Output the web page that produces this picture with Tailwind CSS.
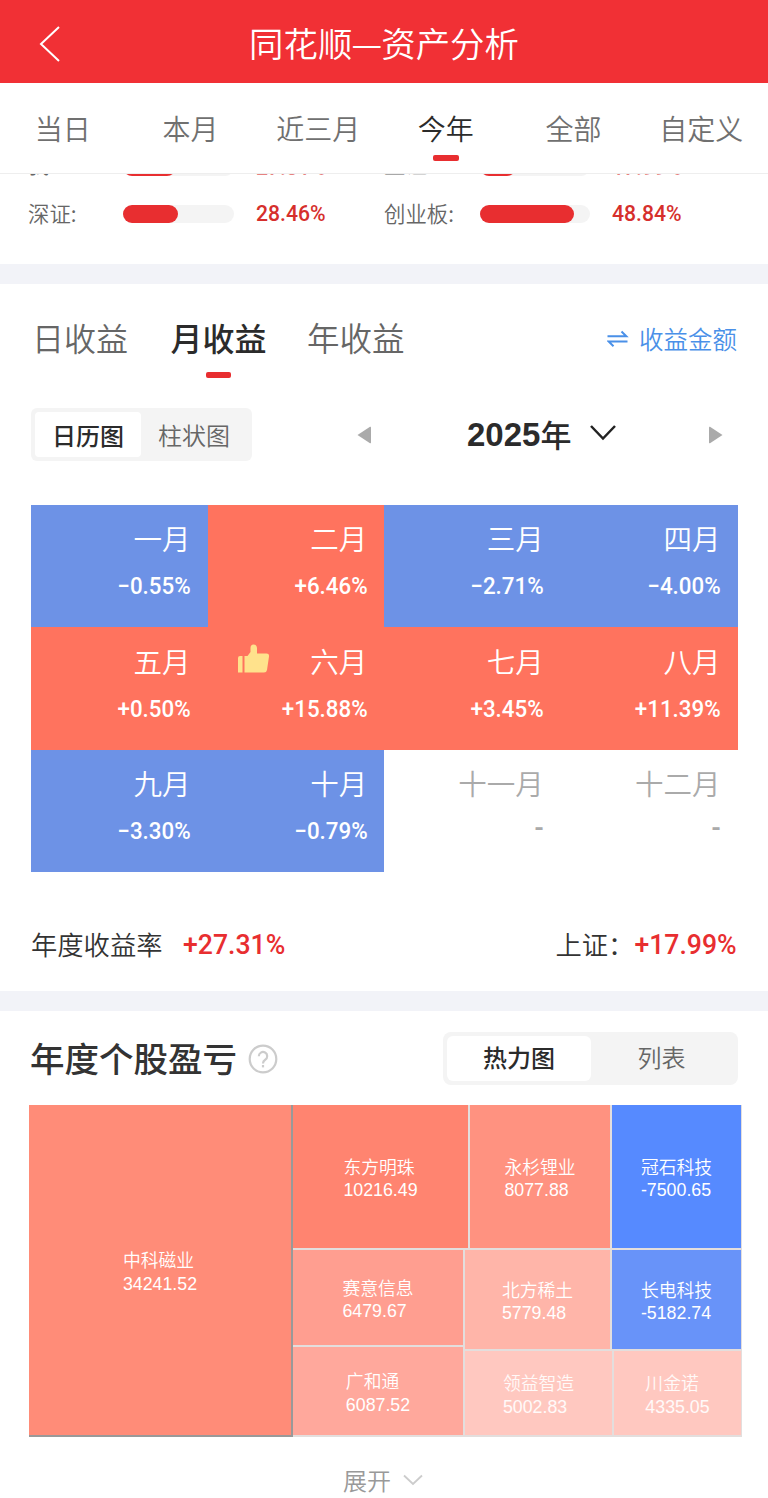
<!DOCTYPE html>
<html lang="zh-CN">
<head>
<meta charset="utf-8">
<title>同花顺—资产分析</title>
<script src="https://cdn.jsdelivr.net/npm/@tailwindcss/browser@4"></script>
</head>
<body class="w-[768px] h-[1498px] overflow-hidden bg-white font-['Noto_Sans_CJK_SC',sans-serif] font-[350] text-[#333] leading-none whitespace-nowrap">

<header class="h-[83px] bg-[#f13035] grid grid-cols-[100px_1fr_100px] items-center text-white">
  <svg class="ml-[38px] mt-1" width="24" height="38" viewBox="0 0 24 38" fill="none" stroke="currentColor" stroke-width="2"><path d="M21 2 3 19 21 36"/></svg>
  <h1 class="flex justify-center text-[34.4px] leading-[40px] font-[350]">同花顺<span class="w-[29px] flex justify-center">—</span>资产分析</h1>
</header>

<nav class="h-[91px] border-b border-[#eee]">
  <div class="grid grid-cols-6 w-[766px] -ml-px text-[28px] leading-[40px] text-[#707070] text-center pt-[25px]">
    <div>当日</div><div>本月</div><div>近三月</div>
    <div class="text-[#2b2b2b] flex flex-col items-center">今年<span class="mt-[7px] w-[26px] h-[6px] rounded-[2px] bg-[#e82e30]"></span></div>
    <div>全部</div><div>自定义</div>
  </div>
</nav>

<section class="h-[90px] overflow-hidden text-[21.400px] text-[#666]">
  <div class="-mt-[31px] grid grid-cols-[95px_132px_129px_96px_132px_1fr] auto-rows-[47px] items-center pl-[28px] [&_p]:font-[Roboto] [&_p]:font-medium [&_p]:text-[22.500px] [&_p]:text-[#d62f2c] [&_p]:scale-x-[.94] [&_p]:origin-left [&_span]:-mt-[2px]">
    <span class="-translate-y-[2px]">我:</span><div class="w-[111px] h-[18px] rounded-full bg-[#f4f4f4]"><div class="w-[53px] h-full rounded-full bg-[#e82e30]"></div></div><p class="ml-px translate-y-px opacity-60">27.31%</p>
    <span class="-translate-y-[2px]">上证:</span><div class="w-[110px] h-[18px] rounded-full bg-[#f4f4f4]"><div class="w-[36px] h-full rounded-full bg-[#e82e30]"></div></div><p class="translate-y-px opacity-60">17.99%</p>
    <span>深证:</span><div class="w-[111px] h-[18px] rounded-full bg-[#f4f4f4]"><div class="w-[55px] h-full rounded-full bg-[#e82e30]"></div></div><p class="ml-px">28.46%</p>
    <span>创业板:</span><div class="w-[110px] h-[18px] rounded-full bg-[#f4f4f4]"><div class="w-[94px] h-full rounded-full bg-[#e82e30]"></div></div><p>48.84%</p>
  </div>
</section>

<div class="h-5 bg-[#f2f3f8]"></div>

<section class="h-[707px] px-[31px]">
  <div class="h-[124px] flex items-start pt-[33px] text-[32px] leading-[40px] text-[#666]">
    <div class="w-[140px] pl-px">日收益</div>
    <div class="w-[136px] font-medium text-[#2b2b2b]"><div class="w-[95px] flex flex-col items-center">月收益<span class="mt-[15px] w-[25px] h-[6px] rounded-[2px] bg-[#e82e30]"></span></div></div>
    <div class="text-[32.500px]">年收益</div>
    <div class="ml-auto flex items-center pt-[2px] text-[24.500px] text-[#4a90e8]">
      <svg class="mr-[10px]" width="22" height="20" viewBox="0 0 22 20" fill="none" stroke="currentColor" stroke-width="2"><path d="M.5 7.200h18.800L14.500 2.500M20.500 12.500H1.700L6.500 17.200"/></svg>收益金额
    </div>
  </div>
  <div class="h-[53px] flex items-center">
    <div class="w-[221px] h-[53px] rounded-md bg-[#f4f4f4] p-1 flex text-[24px] leading-[45px] text-center text-[#666]">
      <div class="w-[106px] h-[45px] rounded bg-white font-medium text-[#2b2b2b]">日历图</div>
      <div class="w-[106px]">柱状图</div>
    </div>
    <svg class="ml-[105px]" width="14" height="18" viewBox="0 0 14 18" fill="#aaa"><path d="M.5 9 13 .8a.7.7 0 0 1 1 .6v15.200a.7.7 0 0 1-1 .6Z"/></svg>
    <div class="ml-[96px] flex items-center text-[31px] leading-[40px] font-medium text-[#2b2b2b]"><span class="font-['Liberation_Sans'] font-bold text-[33px] pt-px">2025</span><span class="-mt-px">年</span></div>
    <svg class="ml-[18px] -mt-[3px]" width="28" height="18" viewBox="0 0 28 18" fill="none" stroke="#222" stroke-width="2.500"><path d="M2 2 14 14.500 26 2"/></svg>
    <svg class="ml-auto mr-[14px]" width="14" height="18" viewBox="0 0 14 18" fill="#aaa"><path d="M13.500 9 1 .8a.7.7 0 0 0-1 .6v15.200a.7.7 0 0 0 1 .6Z"/></svg>
  </div>
  <div class="mt-[43.5px] w-[706.5px] h-[368px] grid grid-cols-4 grid-rows-3 text-right text-white text-[28.500px] [&>div]:pt-[13.500px] [&>div]:pr-[17px] [&>div]:leading-[40px] [&_p]:font-[Roboto] [&_p]:font-medium [&_p]:text-[24px] [&_p]:scale-x-[.93] [&_p]:origin-right [&_p]:leading-[30px] [&_p]:mt-[13px]">
    <div class="bg-[#6d92e6]">一月<p>−0.55%</p></div>
    <div class="bg-[#ff735e]">二月<p>+6.46%</p></div>
    <div class="bg-[#6d92e6]">三月<p>−2.71%</p></div>
    <div class="bg-[#6d92e6]">四月<p>−4.00%</p></div>
    <div class="bg-[#ff735e]">五月<p>+0.50%</p></div>
    <div class="bg-[#ff735e]"><div class="flex justify-between pl-[30px]"><svg class="mt-[3px]" width="32" height="29" viewBox="0 0 32 29" fill="#ffe28c"><path d="M0 14q0-2 2-2h2.500v16.500H0ZM6.500 12h3l3-4V4Q12.500.5 15.500.5T19 4v5.500h9.500q3 0 2.500 3l-2 13.500q-.5 2.500-3 2.500H6.500Z"/></svg>六月</div><p>+15.88%</p></div>
    <div class="bg-[#ff735e]">七月<p>+3.45%</p></div>
    <div class="bg-[#ff735e]">八月<p>+11.39%</p></div>
    <div class="bg-[#6d92e6]">九月<p>−3.30%</p></div>
    <div class="bg-[#6d92e6]">十月<p>−0.79%</p></div>
    <div class="text-[#aaa]">十一月<p class="-translate-y-[3px] !text-[29px]">-</p></div>
    <div class="text-[#aaa]">十二月<p class="-translate-y-[3px] !text-[29px]">-</p></div>
  </div>
  <div class="mt-[52px] flex items-center text-[26.300px] leading-[40px] [&_p]:font-[Roboto] [&_p]:font-medium [&_p]:text-[28px] [&_p]:text-[#e82e30] [&_p]:scale-x-[.95] [&_span]:-mt-[2px]">
    <span>年度收益率</span><p class="ml-[21px] origin-left">+27.31%</p>
    <span class="ml-auto -mr-[5px]">上证：</span><p class="origin-right">+17.99%</p>
  </div>
</section>

<div class="h-5 bg-[#f2f3f8]"></div>

<section>
  <div class="h-[94px] pl-[30px] pr-[30px] pt-[21px] flex items-start">
    <h2 class="text-[34.500px] leading-[52px] font-medium -mt-px">年度个股盈亏</h2>
    <svg class="ml-[11px] mt-[12px]" width="30" height="30" viewBox="0 0 30 30" fill="none" stroke="#ccc" stroke-width="2.200"><circle cx="15" cy="15" r="13.300"/><path d="M10.800 12.200a4.200 4.200 0 1 1 6.400 3.600q-2.200 1.300-2.200 3.700"/><path d="M15 21v2.400"/></svg>
    <div class="ml-auto w-[295px] h-[53px] rounded-lg bg-[#f4f4f4] p-1 flex text-[24px] leading-[42px] text-center text-[#666]">
      <div class="w-[144px] h-[45px] rounded-md bg-white font-medium text-[#2b2b2b]">热力图</div>
      <div class="w-[141px]">列表</div>
    </div>
  </div>
  <div class="ml-[29px] w-[713px] h-[332px] flex bg-[#e3dedd] text-white text-[17.800px] leading-[23.500px] [&_.cell]:flex [&_.cell]:items-center [&_.cell]:justify-center [&_.cell]:pt-[4px] [&_p]:font-['Liberation_Sans'] [&_p]:pt-px">
    <div class="cell w-[264px] bg-[#ff8c78] border-r-2 border-b-2 border-[#999]"><div>中科磁业<p>34241.52</p></div></div>
    <div class="flex-1 flex flex-col gap-[2px] pr-px pb-[2px]">
      <div class="h-[143px] flex gap-[2px]">
        <div class="cell w-[175px] bg-[#ff8470]"><div>东方明珠<p>10216.49</p></div></div>
        <div class="cell w-[140px] bg-[#ff9280]"><div>永杉锂业<p>8077.88</p></div></div>
        <div class="cell flex-1 bg-[#568aff]"><div>冠石科技<p>-7500.65</p></div></div>
      </div>
      <div class="flex-1 flex gap-[2px]">
        <div class="w-[170px] flex flex-col gap-[2px]">
          <div class="cell h-[95px] bg-[#ff9e90]"><div>赛意信息<p>6479.67</p></div></div>
          <div class="cell flex-1 bg-[#ffa89c]"><div>广和通<p>6087.52</p></div></div>
        </div>
        <div class="flex-1 flex flex-col gap-[2px]">
          <div class="h-[99px] flex gap-[2px]">
            <div class="cell w-[145px] bg-[#ffb5a9]"><div>北方稀土<p>5779.48</p></div></div>
            <div class="cell flex-1 bg-[#6893f9]"><div>长电科技<p>-5182.74</p></div></div>
          </div>
          <div class="flex-1 flex gap-[2px]">
            <div class="cell w-[147px] bg-[#ffc8c0] text-white/90"><div>领益智造<p>5002.83</p></div></div>
            <div class="cell flex-1 bg-[#ffc8c0] text-white/90"><div>川金诺<p>4335.05</p></div></div>
          </div>
        </div>
      </div>
    </div>
  </div>
  <div class="mt-[23px] pr-[2px] flex justify-center items-center text-[24px] leading-[40px] text-[#999]">展开<svg class="ml-[12px]" width="20" height="12" viewBox="0 0 20 12" fill="none" stroke="#ccc" stroke-width="1.800"><path d="M1 1.500 10 10l9-8.500"/></svg></div>
</section>
</body>
</html>
